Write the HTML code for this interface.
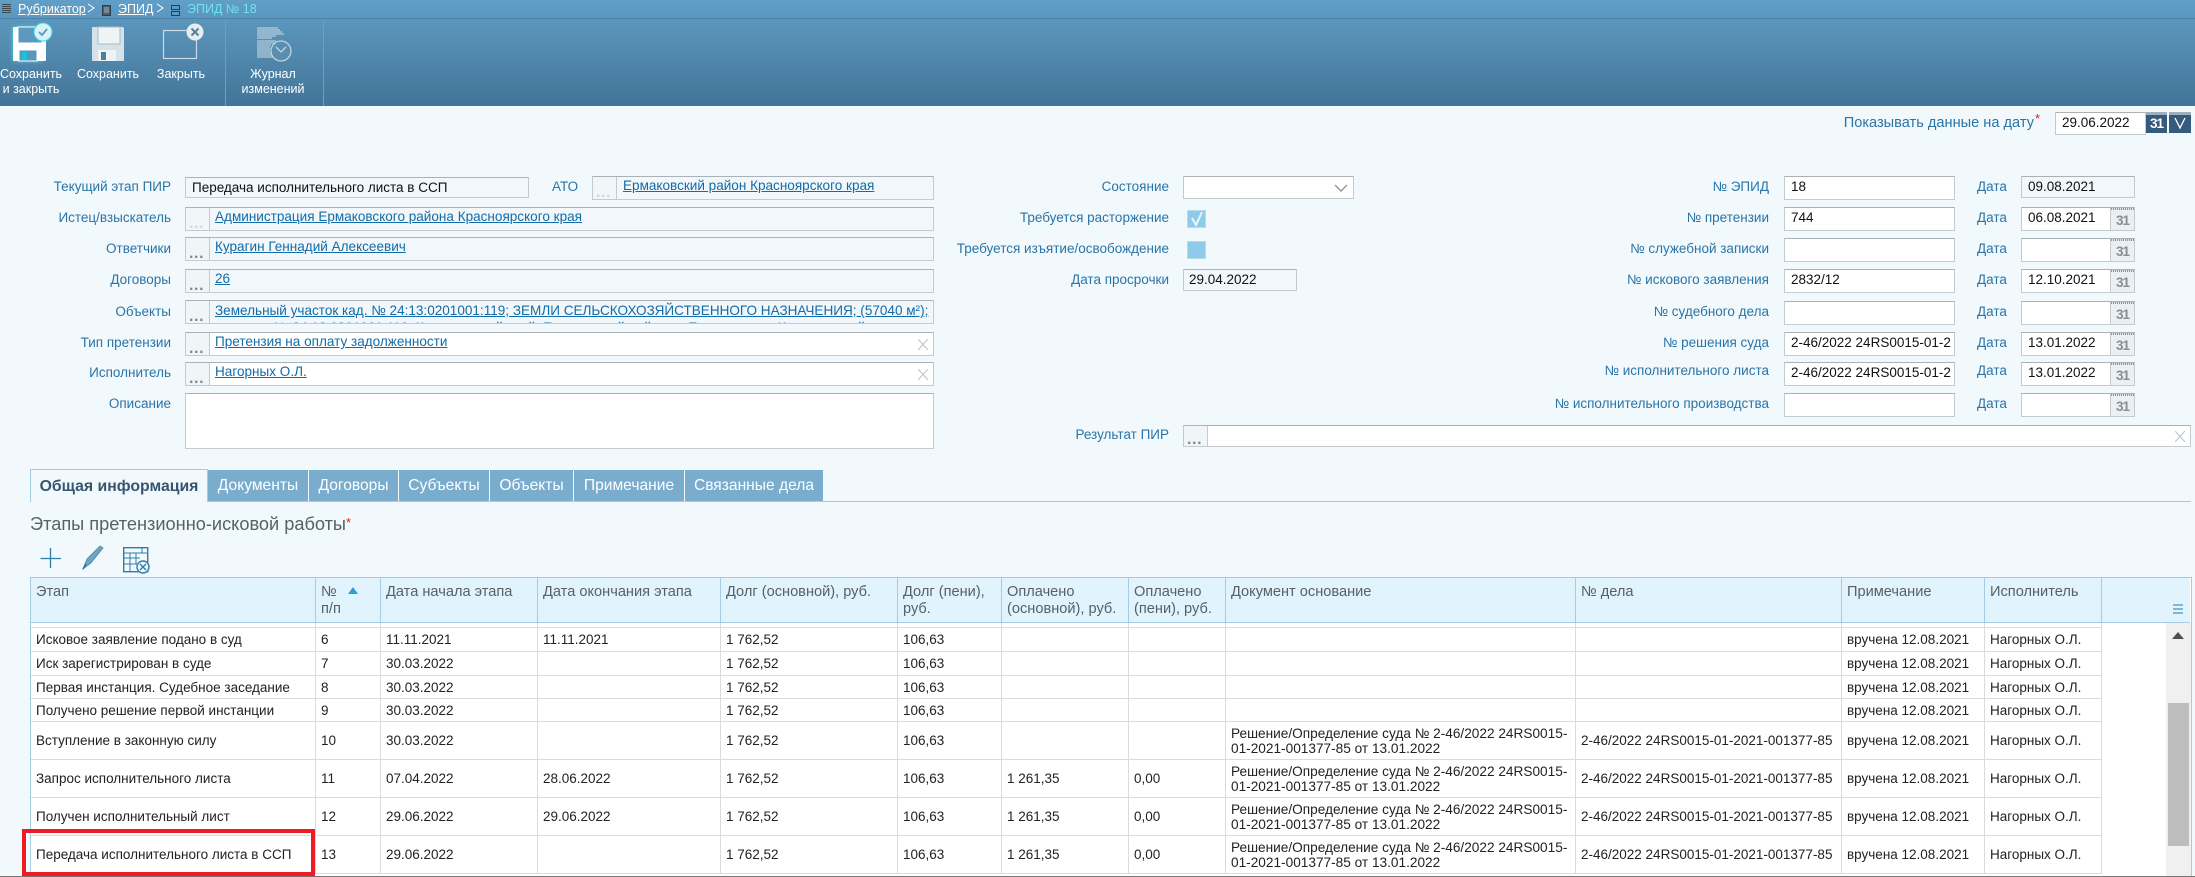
<!DOCTYPE html>
<html lang="ru"><head><meta charset="utf-8"><title>ЭПИД № 18</title>
<style>
html,body{margin:0;padding:0;width:2195px;height:877px;overflow:hidden;background:#f2f9fd}
body{position:relative;font-family:"Liberation Sans",Arial,sans-serif;font-size:13.5px;color:#222;filter:blur(.3px)}
div,span,a{box-sizing:border-box}
.a{position:absolute}
.hdr{left:0;top:0;width:2195px;height:106px;background:linear-gradient(#619fc8 0,#5b97bf 18px,#5c96bc 19px,#427497 106px)}
.bc{position:absolute;top:1px;height:16px;line-height:16px;font-size:12.5px;color:#fff;white-space:nowrap}
.tb{position:absolute;color:#fff;font-size:12.5px;line-height:15px;text-align:center;white-space:nowrap;transform:translateX(-50%)}
.l{position:absolute;height:20px;line-height:20px;color:#2a74a6;text-align:right;white-space:nowrap;font-size:13.5px}
.f{position:absolute;border:1px solid #c4cbcf;border-top-color:#aab2b6;background:#fff;line-height:20px;padding-left:6px;white-space:nowrap;overflow:hidden;color:#111}
.r{background:#f1f7fa}
.b{position:absolute;left:0;top:0;bottom:0;width:24px;background:#f0f5f8;border-right:1px solid #c4cbcf;color:#85898c;font-weight:bold;font-size:16px;line-height:12px;letter-spacing:.6px;padding:10px 0 0 3px;overflow:hidden}
.lk{position:absolute;color:#126ca8;text-decoration:underline;white-space:nowrap;line-height:18px;font-size:13.55px}
.d{position:absolute;height:20px;line-height:20px;color:#2a74a6;left:1977px;white-space:nowrap}
.c{position:absolute;right:0;top:-1px;bottom:0;width:24px;background:#e9eff2;border-left:1px solid #c4cbcf;color:#868f95;font-weight:bold;font-size:13.5px;line-height:27px;text-align:center;letter-spacing:-1px}
.c:before{content:"";position:absolute;left:0;right:0;top:0;height:3px;background:repeating-linear-gradient(90deg,#8f989d 0 1px,#dfe5e8 1px 2px)}
.x{position:absolute;right:5px;top:6px;width:10px;height:11px}
.tab{position:absolute;top:470px;height:31px;background:#7aacce;color:#fff;font-size:15.6px;line-height:31px;text-align:center;white-space:nowrap}
.tw{position:absolute;left:30px;top:577px;width:2162px;height:299px;border:1px solid #a6cce3;border-bottom:0;background:#fff;overflow:hidden}
table{border-collapse:separate;border-spacing:0;table-layout:fixed;width:2159px;font-size:13.5px}
th{background:#e1f3fc;border-right:1px solid #a6cce3;border-bottom:1px solid #a6cce3;font-weight:normal;font-size:14.6px;color:#566168;text-align:left;vertical-align:top;padding:6px 2px 0 5px;line-height:17px;height:45px;box-sizing:border-box}
td{border-right:1px solid #d9dcde;border-bottom:1px solid #d9dcde;padding:0 2px 0 5px;line-height:15px;color:#222;overflow:hidden;white-space:nowrap;box-sizing:border-box}
td.w{font-size:13.65px}
td.n,th.n{border:0}
th.n{border-bottom:1px solid #a6cce3}
</style></head><body>

<div class="a hdr"></div>
<div class="a" style="left:0;top:18px;width:2195px;height:1px;background:#4b83a8"></div>
<div class="a" style="left:225px;top:20px;width:1px;height:86px;background:#6f9fc0"></div>
<div class="a" style="left:323px;top:20px;width:1px;height:86px;background:#6f9fc0"></div>

<svg class="a" style="left:0;top:0" width="340" height="106" viewBox="0 0 340 106" fill="none">
 <g stroke="#3b4a55" stroke-width="1"><path d="M2 4.500H11M2 6.500H11M2 8.500H11M2 10.500H11M2 12.500H11"/></g>
 <rect x="102.500" y="5.500" width="8" height="10" fill="#4a5f6e" stroke="#2f3d47"/>
 <path d="M104 8H109M104 10H109M104 12H109" stroke="#9fb3c0"/>
 <rect x="171.500" y="5.500" width="8" height="4" stroke="#2f3d47"/><rect x="171.500" y="11.500" width="8" height="4" stroke="#2f3d47"/>
 <path d="M88 4L94 8L88 12" stroke="#fff"/><path d="M157 4L163 8L157 12" stroke="#fff"/>
 <defs><filter id="g" x="-30%" y="-30%" width="160%" height="160%"><feGaussianBlur stdDeviation="2"/></filter></defs>
 <path d="M13 27H42V61H13Z" fill="#35e0ee" filter="url(#g)"/>
 <path d="M13 28Q13 27 14 27H41L46 32V60Q46 61 45 61H14Q13 61 13 60Z" fill="#fff"/>
 <rect x="18" y="27" width="24" height="16" fill="#5d98bf" stroke="#fff"/>
 <rect x="19" y="50" width="18" height="11" fill="#5a96bc" stroke="#fff"/><rect x="22" y="52" width="5" height="8" fill="#16c6d6"/>
 <circle cx="43" cy="32" r="9" fill="#d8f2f6" stroke="#37d8e8"/>
 <path d="M39 32L42 35L47 29" stroke="#5d98bf" stroke-width="1.800"/>
 <path d="M92 28Q92 27 93 27H123L124 28V60Q124 61 123 61H93Q92 61 92 60Z" fill="#d6e2ea"/>
 <rect x="98" y="27" width="22" height="17" fill="#eef3f6" stroke="#a8bccb"/>
 <rect x="98" y="50" width="18" height="11" fill="#eef3f6"/><rect x="101" y="52" width="5" height="8" fill="#4d7f9f"/>
 <rect x="163.500" y="30.500" width="33" height="28" stroke="#c9dbe7" stroke-width="1.200"/>
 <circle cx="195" cy="32" r="8.500" fill="#e6edf1"/>
 <path d="M191.500 28.500L198.500 35.500M198.500 28.500L191.500 35.500" stroke="#5b7f99" stroke-width="2"/>
 <path d="M257 28H278M257 30H280M257 32H282M257 34H284M257 36H276M257 38H272M257 41H276M257 43H274M257 45H271M257 47H270M257 49H270M257 51H270M257 53H271M257 55H272M257 57H273" stroke="#cfdde6"/>
 <circle cx="281" cy="51" r="10" fill="#5b8eb0" stroke="#c3d4df" stroke-width="1.300"/>
 <path d="M276 47L281 52L286 47" stroke="#c3d4df" stroke-width="1.300"/>
</svg>

<a class="bc" style="left:18px;text-decoration:underline">Рубрикатор</a>
<a class="bc" style="left:118px;text-decoration:underline">ЭПИД</a>
<span class="bc" style="left:187px;color:#6fe3ef">ЭПИД № 18</span>

<div class="tb" style="left:31px;top:67px">Сохранить<br>и закрыть</div>
<div class="tb" style="left:108px;top:67px">Сохранить</div>
<div class="tb" style="left:181px;top:67px">Закрыть</div>
<div class="tb" style="left:273px;top:67px">Журнал<br>изменений</div>

<!-- show date -->
<div class="l" style="right:161px;top:113px;font-size:14.6px">Показывать данные на дату</div>
<span class="a" style="left:2035px;top:111px;color:#e02020;font-size:13px">*</span>
<div class="f" style="left:2055px;top:112px;width:91px;height:23px;padding-left:6px">29.06.2022</div>
<div class="a" style="left:2146px;top:112px;width:21px;height:21px;background:#345a7c;border-top:3px solid #9fb0bd;color:#fff;font-weight:bold;font-size:13.5px;line-height:18px;text-align:center;letter-spacing:-1px">31</div>
<div class="a" style="left:2169px;top:112px;width:22px;height:21px;background:#345a7c;border-top:3px solid #9fb0bd"><svg width="22" height="18"><path d="M6 3L11 13L16 3" stroke="#fff" fill="none" stroke-width="1.300"/></svg></div>

<!-- col 1 -->
<div class="l" style="right:2024px;top:177px">Текущий этап ПИР</div>
<div class="l" style="right:2024px;top:208px">Истец/взыскатель</div>
<div class="l" style="right:2024px;top:239px">Ответчики</div>
<div class="l" style="right:2024px;top:270px">Договоры</div>
<div class="l" style="right:2024px;top:302px">Объекты</div>
<div class="l" style="right:2024px;top:333px">Тип претензии</div>
<div class="l" style="right:2024px;top:363px">Исполнитель</div>
<div class="l" style="right:2024px;top:394px">Описание</div>

<div class="f r" style="left:185px;top:177px;width:344px;height:21px;line-height:19px">Передача исполнительного листа в ССП</div>
<div class="l" style="left:552px;top:177px">АТО</div>
<div class="f r" style="left:592px;top:176px;width:342px;height:24px"><span class="b" style="color:#d4d8da;background:#f1f6f9">...</span><span class="lk" style="left:30px;top:0">Ермаковский район Красноярского края</span></div>
<div class="f r" style="left:185px;top:207px;width:749px;height:24px"><span class="b" style="color:#d4d8da;background:#f1f6f9">...</span><span class="lk" style="left:29px;top:0">Администрация Ермаковского района Красноярского края</span></div>
<div class="f r" style="left:185px;top:237px;width:749px;height:24px"><span class="b">...</span><span class="lk" style="left:29px;top:0">Курагин Геннадий Алексеевич</span></div>
<div class="f r" style="left:185px;top:269px;width:749px;height:24px"><span class="b">...</span><span class="lk" style="left:29px;top:0">26</span></div>
<div class="f r" style="left:185px;top:300px;width:749px;height:24px"><span class="b">...</span><span class="lk" style="left:29px;top:1px">Земельный участок кад. № 24:13:0201001:119; ЗЕМЛИ СЕЛЬСКОХОЗЯЙСТВЕННОГО НАЗНАЧЕНИЯ; (57040 м²);</span><span class="lk" style="left:59px;top:18px">кад. № 24:13:0201001:119; Красноярский край, Ермаковский район, с. Ермаковское; Красноярский</span></div>
<div class="f" style="left:185px;top:332px;width:749px;height:24px"><span class="b">...</span><span class="lk" style="left:29px;top:0">Претензия на оплату задолженности</span><svg class="x" viewBox="0 0 10 11"><path d="M0 0L10 11M10 0L0 11" stroke="#c4c8ca" stroke-width="1.200"/></svg></div>
<div class="f" style="left:185px;top:362px;width:749px;height:24px"><span class="b">...</span><span class="lk" style="left:29px;top:0">Нагорных О.Л.</span><svg class="x" viewBox="0 0 10 11"><path d="M0 0L10 11M10 0L0 11" stroke="#c4c8ca" stroke-width="1.200"/></svg></div>
<div class="f" style="left:185px;top:393px;width:749px;height:56px"></div>

<!-- col 2 -->
<div class="l" style="right:1026px;top:177px">Состояние</div>
<div class="l" style="right:1026px;top:208px">Требуется расторжение</div>
<div class="l" style="right:1026px;top:239px">Требуется изъятие/освобождение</div>
<div class="l" style="right:1026px;top:270px">Дата просрочки</div>
<div class="l" style="right:1026px;top:425px">Результат ПИР</div>
<div class="f" style="left:1183px;top:176px;width:171px;height:23px"><svg class="a" style="left:150px;top:6px" width="14" height="10"><path d="M1 2L7 8L13 2" stroke="#8f979c" fill="none" stroke-width="1.400"/></svg></div>
<div class="a" style="left:1187px;top:210px;width:19px;height:18px;background:#8fcbe9;border:1px solid #b5dcef"><svg width="17" height="16"><path d="M4 7L8 14L14 1" stroke="#e8f6fc" fill="none" stroke-width="2"/></svg></div>
<div class="a" style="left:1187px;top:241px;width:19px;height:18px;background:#8fcbe9;border:1px solid #b5dcef"></div>
<div class="f r" style="left:1183px;top:269px;width:114px;height:22px;line-height:20px;padding-left:5px">29.04.2022</div>
<div class="f" style="left:1183px;top:425px;width:1008px;height:22px"><span class="b" style="padding-top:8px">...</span><svg class="x" style="top:5px" viewBox="0 0 10 11"><path d="M0 0L10 11M10 0L0 11" stroke="#c4c8ca" stroke-width="1.200"/></svg></div>

<!-- col 3 -->
<div class="l" style="right:426px;top:177px">№ ЭПИД</div>
<div class="l" style="right:426px;top:208px">№ претензии</div>
<div class="l" style="right:426px;top:239px">№ служебной записки</div>
<div class="l" style="right:426px;top:270px">№ искового заявления</div>
<div class="l" style="right:426px;top:302px">№ судебного дела</div>
<div class="l" style="right:426px;top:333px">№ решения суда</div>
<div class="l" style="right:426px;top:361px">№ исполнительного листа</div>
<div class="l" style="right:426px;top:394px">№ исполнительного производства</div>

<div class="f" style="left:1784px;top:176px;width:171px;height:24px">18</div>
<div class="f" style="left:1784px;top:207px;width:171px;height:24px">744</div>
<div class="f" style="left:1784px;top:238px;width:171px;height:24px"></div>
<div class="f" style="left:1784px;top:269px;width:171px;height:24px">2832/12</div>
<div class="f" style="left:1784px;top:301px;width:171px;height:24px"></div>
<div class="f" style="left:1784px;top:332px;width:171px;height:24px">2-46/2022 24RS0015-01-2</div>
<div class="f" style="left:1784px;top:362px;width:171px;height:24px">2-46/2022 24RS0015-01-2</div>
<div class="f" style="left:1784px;top:393px;width:171px;height:24px"></div>

<div class="d" style="top:177px">Дата</div><div class="d" style="top:208px">Дата</div><div class="d" style="top:239px">Дата</div><div class="d" style="top:270px">Дата</div><div class="d" style="top:302px">Дата</div><div class="d" style="top:333px">Дата</div><div class="d" style="top:361px">Дата</div><div class="d" style="top:394px">Дата</div>

<div class="f r" style="left:2021px;top:176px;width:114px;height:22px;line-height:19px">09.08.2021</div>
<div class="f" style="left:2021px;top:207px;width:114px;height:24px">06.08.2021<span class="c">31</span></div>
<div class="f" style="left:2021px;top:238px;width:114px;height:24px"><span class="c">31</span></div>
<div class="f" style="left:2021px;top:269px;width:114px;height:24px">12.10.2021<span class="c">31</span></div>
<div class="f" style="left:2021px;top:301px;width:114px;height:24px"><span class="c">31</span></div>
<div class="f" style="left:2021px;top:332px;width:114px;height:24px">13.01.2022<span class="c">31</span></div>
<div class="f" style="left:2021px;top:362px;width:114px;height:24px">13.01.2022<span class="c">31</span></div>
<div class="f" style="left:2021px;top:393px;width:114px;height:24px"><span class="c">31</span></div>

<!-- tabs -->
<div class="a" style="left:30px;top:501px;width:2161px;height:1px;background:#a6cce3"></div>
<div class="tab" style="left:30px;top:469px;width:178px;height:33px;background:#f2f9fd;border:1px solid #a6cce3;border-bottom:0;color:#35566e;font-weight:bold;font-size:15.8px;line-height:33px">Общая информация</div>
<div class="tab" style="left:208px;width:100px">Документы</div>
<div class="tab" style="left:309px;width:89px">Договоры</div>
<div class="tab" style="left:399px;width:90px">Субъекты</div>
<div class="tab" style="left:490px;width:83px">Объекты</div>
<div class="tab" style="left:574px;width:110px">Примечание</div>
<div class="tab" style="left:685px;width:138px">Связанные дела</div>

<div class="a" style="left:30px;top:512px;height:22px;line-height:22px;font-size:18.2px;color:#566168;white-space:nowrap">Этапы претензионно-исковой работы<span style="color:#e02020;font-size:13px;vertical-align:3px">*</span></div>

<svg class="a" style="left:30px;top:540px" width="130" height="36" viewBox="0 0 130 36" fill="none">
 <path d="M10.500 18.500H31M20.500 8V28" stroke="#2e7da8" stroke-width="1.300"/>
 <path d="M53 29L57 19L70 6L73 8L61 23Z" fill="#6fa3c3" stroke="#4a86ab" stroke-width=".8"/>
 <path d="M53 29L56 24" stroke="#2e6d93" stroke-width="1.400"/>
 <rect x="93.700" y="7.700" width="24" height="24" stroke="#2e7da8" stroke-width="1.400"/>
 <path d="M94 13H118M94 18H110M100 13V31M106 13V24M112 7V13M94 24H108" stroke="#2e7da8"/>
 <circle cx="113" cy="27" r="6" fill="#f2f9fd" stroke="#2e7da8" stroke-width="1.400"/>
 <path d="M110 24L116 30M116 24L110 30" stroke="#2e7da8" stroke-width="1.400"/>
</svg>

<!-- table -->
<div class="tw">
<table>
<colgroup><col style="width:285px"><col style="width:65px"><col style="width:157px"><col style="width:183px"><col style="width:177px"><col style="width:104px"><col style="width:127px"><col style="width:97px"><col style="width:350px"><col style="width:266px"><col style="width:143px"><col style="width:117px"><col style="width:88px"></colgroup>
<tr><th>Этап</th><th>№<br>п/п</th><th>Дата начала этапа</th><th>Дата окончания этапа</th><th>Долг (основной), руб.</th><th>Долг (пени), руб.</th><th>Оплачено (основной), руб.</th><th>Оплачено (пени), руб.</th><th>Документ основание</th><th>№ дела</th><th>Примечание</th><th>Исполнитель</th><th class="n"></th></tr>
<tr style="height:5px"><td></td><td></td><td></td><td></td><td></td><td></td><td></td><td></td><td></td><td></td><td></td><td></td><td class="n"></td></tr>
<tr style="height:24px"><td>Исковое заявление подано в суд</td><td>6</td><td>11.11.2021</td><td>11.11.2021</td><td>1 762,52</td><td>106,63</td><td></td><td></td><td></td><td></td><td>вручена 12.08.2021</td><td>Нагорных О.Л.</td><td class="n"></td></tr>
<tr style="height:24px"><td>Иск зарегистрирован в суде</td><td>7</td><td>30.03.2022</td><td></td><td>1 762,52</td><td>106,63</td><td></td><td></td><td></td><td></td><td>вручена 12.08.2021</td><td>Нагорных О.Л.</td><td class="n"></td></tr>
<tr style="height:23px"><td>Первая инстанция. Судебное заседание</td><td>8</td><td>30.03.2022</td><td></td><td>1 762,52</td><td>106,63</td><td></td><td></td><td></td><td></td><td>вручена 12.08.2021</td><td>Нагорных О.Л.</td><td class="n"></td></tr>
<tr style="height:23px"><td>Получено решение первой инстанции</td><td>9</td><td>30.03.2022</td><td></td><td>1 762,52</td><td>106,63</td><td></td><td></td><td></td><td></td><td>вручена 12.08.2021</td><td>Нагорных О.Л.</td><td class="n"></td></tr>
<tr style="height:38px"><td>Вступление в законную силу</td><td>10</td><td>30.03.2022</td><td></td><td>1 762,52</td><td>106,63</td><td></td><td></td><td class="w">Решение/Определение суда № 2-46/2022 24RS0015-<br>01-2021-001377-85 от 13.01.2022</td><td>2-46/2022 24RS0015-01-2021-001377-85</td><td>вручена 12.08.2021</td><td>Нагорных О.Л.</td><td class="n"></td></tr>
<tr style="height:38px"><td>Запрос исполнительного листа</td><td>11</td><td>07.04.2022</td><td>28.06.2022</td><td>1 762,52</td><td>106,63</td><td>1 261,35</td><td>0,00</td><td class="w">Решение/Определение суда № 2-46/2022 24RS0015-<br>01-2021-001377-85 от 13.01.2022</td><td>2-46/2022 24RS0015-01-2021-001377-85</td><td>вручена 12.08.2021</td><td>Нагорных О.Л.</td><td class="n"></td></tr>
<tr style="height:38px"><td>Получен исполнительный лист</td><td>12</td><td>29.06.2022</td><td>29.06.2022</td><td>1 762,52</td><td>106,63</td><td>1 261,35</td><td>0,00</td><td class="w">Решение/Определение суда № 2-46/2022 24RS0015-<br>01-2021-001377-85 от 13.01.2022</td><td>2-46/2022 24RS0015-01-2021-001377-85</td><td>вручена 12.08.2021</td><td>Нагорных О.Л.</td><td class="n"></td></tr>
<tr style="height:38px"><td>Передача исполнительного листа в ССП</td><td>13</td><td>29.06.2022</td><td></td><td>1 762,52</td><td>106,63</td><td>1 261,35</td><td>0,00</td><td class="w">Решение/Определение суда № 2-46/2022 24RS0015-<br>01-2021-001377-85 от 13.01.2022</td><td>2-46/2022 24RS0015-01-2021-001377-85</td><td>вручена 12.08.2021</td><td>Нагорных О.Л.</td><td class="n"></td></tr>
</table>
</div>

<svg class="a" style="left:348px;top:587px" width="10" height="7"><path d="M0 7L5 0L10 7Z" fill="#2d9fd8"/></svg>
<div class="a" style="left:2173px;top:604px;width:10px;height:11px;background:repeating-linear-gradient(#7fb5d5 0 2px,transparent 2px 4px)"></div>

<!-- scrollbar -->
<div class="a" style="left:2166px;top:623px;width:25px;height:253px;background:#f0f0f0"></div>
<svg class="a" style="left:2172px;top:632px" width="12" height="8"><path d="M0 7L6 0L12 7Z" fill="#505050"/></svg>
<div class="a" style="left:2168px;top:703px;width:21px;height:143px;background:#bdbdbd"></div>

<!-- bottom line -->
<div class="a" style="left:0;top:876px;width:2195px;height:1px;background:#777"></div>

<!-- red box -->
<div class="a" style="left:22px;top:829px;width:293px;height:47px;border:4px solid #ed1c24"></div>

</body></html>
